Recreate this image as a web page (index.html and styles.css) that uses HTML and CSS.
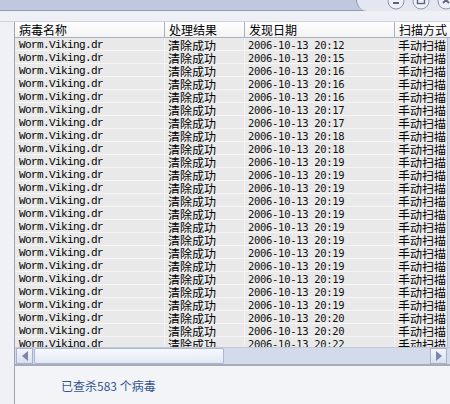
FILE: index.html
```html
<!DOCTYPE html>
<html lang="zh">

<head>
  <meta charset="utf-8">
  <title>病毒记录</title>
  <link rel="stylesheet" href="styles.css">
</head>

<body>
  <div class="titlebar">
    <div class="topband">
      <div class="tabband"></div>
      <div class="winbtns">
        <span class="winbtn">
          <svg width="18" height="18" viewBox="0 0 18 18"><circle cx="9" cy="9" r="8" fill="#eef1f7" stroke="#8d97b0"/><rect x="6" y="10" width="6" height="2" fill="#5a6480"/></svg>
        </span>
        <span class="winbtn">
          <svg width="18" height="18" viewBox="0 0 18 18"><circle cx="9" cy="9" r="8" fill="#eef1f7" stroke="#8d97b0"/><rect x="5.5" y="5.5" width="7" height="6" fill="none" stroke="#5a6480" stroke-width="1.4"/></svg>
        </span>
        <span class="winbtn">
          <svg width="18" height="18" viewBox="0 0 18 18"><circle cx="9" cy="9" r="8" fill="#eef1f7" stroke="#8d97b0"/><path d="M6 5 L12 11 M12 5 L6 11" stroke="#5a6480" stroke-width="1.8"/></svg>
        </span>
      </div>
    </div>
    <div class="lowband"></div>
  </div>

  <div class="main">
    <div class="side"></div>
    <div class="content">
      <div class="list">
        <div class="head">
          <div class="cell">病毒名称</div>
          <div class="cell">处理结果</div>
          <div class="cell">发现日期</div>
          <div class="cell">扫描方式</div>
        </div>
        <div class="rows" id="rows"></div>
        <div class="vscroll"></div>
      </div>
      <div class="hscroll">
        <div class="sbtn">
          <svg width="8" height="10" viewBox="0 0 8 10"><path d="M7 0 L7 10 L1 5 Z" fill="#7b87a8"/></svg>
        </div>
        <div class="thumb"></div>
        <div class="track"></div>
        <div class="sbtn">
          <svg width="8" height="10" viewBox="0 0 8 10"><path d="M1 0 L1 10 L7 5 Z" fill="#7b87a8"/></svg>
        </div>
        <div class="rest"></div>
      </div>
      <div class="status">已查杀583 个病毒</div>
    </div>
  </div>

  <script>
    let minuty = ["12", "15", "16", "16", "16", "17", "17", "18", "18",
      "19", "19", "19", "19", "19", "19", "19", "19", "19", "19", "19", "19",
      "20", "20", "22"];
    let lista = document.getElementById("rows");
    for (let i = 0; i < minuty.length; i++) {
      let wiersz = document.createElement("div");
      wiersz.className = "row";
      wiersz.innerHTML =
        '<div class="cell name">Worm.Viking.dr</div>' +
        '<div class="cell">清除成功</div>' +
        '<div class="cell date">2006-10-13 20:' + minuty[i] + '</div>' +
        '<div class="cell">手动扫描</div>';
      lista.appendChild(wiersz);
    }
  </script>
</body>

</html>
```

FILE: styles.css
```css
body {
  margin: 0;
  width: 450px;
  height: 404px;
  overflow: hidden;
  background-color: #f3f4f8;
  font-family: "Noto Sans CJK SC", "Liberation Sans", sans-serif;
  font-size: 12px;
  color: #000;
}

.titlebar {
  height: 22px;
  display: flex;
  flex-direction: column;
}

.topband {
  height: 10px;
  display: flex;
  background-color: #bfc8dd;
  border-bottom: 1px solid #8f9ab6;
}

.tabband {
  flex-shrink: 0;
  width: 356px;
}

.winbtns {
  flex: 1;
  display: flex;
  gap: 7px;
  padding-left: 30px;
  background-color: #e3e7f0;
  border-bottom-left-radius: 14px;
  border-left: 1px solid #8f9ab6;
  margin-bottom: -1px;
}

.winbtn {
  flex-shrink: 0;
  width: 18px;
  height: 18px;
  margin-top: -8px;
}

.winbtn svg {
  display: block;
}

.lowband {
  flex: 1;
  background-color: #eef0f5;
  border-bottom: 1px solid #cfd4e0;
}

.main {
  display: flex;
  height: 382px;
}

.side {
  flex-shrink: 0;
  width: 14px;
  border-right: 1px solid #9ea4b2;
  background-color: #f0f1f6;
}

.content {
  flex: 1;
  min-width: 0;
  display: flex;
  flex-direction: column;
}

.list {
  flex-shrink: 0;
  height: 325px;
  overflow: hidden;
  position: relative;
  background-color: #e9e9e9;
}

.head {
  display: grid;
  grid-template-columns: 150px 80px 150px 60px;
  height: 16px;
  background: linear-gradient(#ffffff, #f3f3f3);
  border-bottom: 1px solid #a9b0c0;
  box-sizing: border-box;
}

.head .cell {
  line-height: 15px;
  padding-left: 4px;
  overflow: hidden;
  white-space: nowrap;
  border-right: 1px solid #aab0be;
}

.row {
  display: grid;
  grid-template-columns: 150px 80px 150px 60px;
  height: 13px;
  background: linear-gradient(#e9e9e9 12px, #f6f6f6 12px);
}

.row .cell {
  height: 13px;
  line-height: 15px;
  padding-left: 3px;
  white-space: nowrap;
  overflow: hidden;
  border-right: 1px solid #f3f3f3;
  box-sizing: border-box;
}

.row .name {
  font-family: "Liberation Mono", monospace;
  font-size: 11px;
  letter-spacing: -0.6px;
  padding-left: 4px;
}

.row .date {
  font-family: "DejaVu Sans Mono", monospace;
  font-size: 10.5px;
  letter-spacing: -0.3px;
  color: #111;
}

.vscroll {
  position: absolute;
  right: 0;
  top: 16px;
  bottom: 0;
  width: 2px;
  background-color: #d4dbea;
  border-left: 1px solid #b5bdd0;
}

.hscroll {
  flex-shrink: 0;
  height: 17px;
  display: flex;
  background-color: #d3daea;
  border-top: 1px solid #c2c9da;
  box-sizing: border-box;
}

.sbtn {
  width: 15px;
  height: 14px;
  margin: 0 1px;
  border: 1px solid #a7b2cf;
  background: linear-gradient(#f4f6fb, #d9dfee);
  display: flex;
  align-items: center;
  justify-content: center;
}

.thumb {
  width: 188px;
  height: 14px;
  border: 1px solid #a9b6d4;
  border-radius: 2px;
  background: linear-gradient(#f7f9fd, #e3e8f4);
}

.track {
  flex: 1;
}

.rest {
  width: 2px;
}

.status {
  flex: 1;
  border-top: 2px solid #a6abb8;
  display: flex;
  align-items: center;
  padding-left: 46px;
  color: #34558f;
  background-color: #f3f4f8;
}
```
